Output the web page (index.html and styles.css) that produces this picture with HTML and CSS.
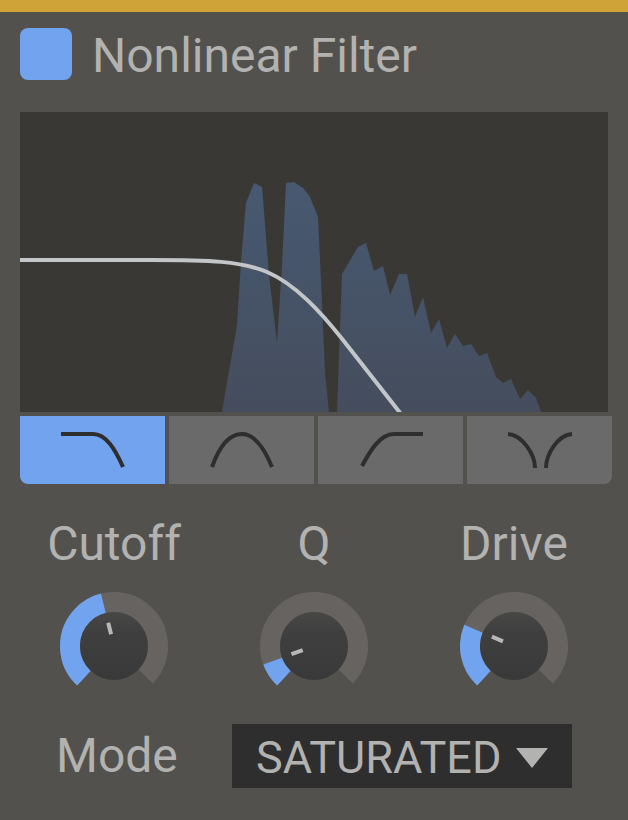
FILE: index.html
```html
<!DOCTYPE html>
<html lang="en">

<head>
  <meta charset="utf-8">
  <meta name="viewport" content="width=device-width, initial-scale=1">
  <title>Nonlinear Filter</title>
  <link rel="stylesheet" href="styles.css">
</head>

<body>
  <main class="panel">
    <header class="panel-header">
      <input class="power" type="checkbox" id="power" checked>
      <label for="power">Nonlinear Filter</label>
    </header>

    <svg class="display" viewBox="0 0 588 300" preserveAspectRatio="none" role="img" aria-label="Filter response">
      <defs>
        <linearGradient id="spectrumFill" x1="0" y1="0" x2="0" y2="1">
          <stop offset="0" stop-color="#475971" />
          <stop offset="1" stop-color="#454d5d" />
        </linearGradient>
        <linearGradient id="capFill" x1="0" y1="0" x2="0" y2="1">
          <stop offset="0" stop-color="#474746" />
          <stop offset="0.3" stop-color="#3f3f3f" />
          <stop offset="1" stop-color="#393939" />
        </linearGradient>
      </defs>
      <path fill="url(#spectrumFill)" d="M202 300 L217 213 L221 150 L226 91 L234 71 L242 75 L249 163 L257 231 L262 155 L266 71 L274 70 L283 76 L290 85 L298 105 L302 191 L305 261 L309 300 Z
        M317 300 L322 162 L338 135 L346 131 L354 159 L363 154 L370 183 L379 162 L387 162 L395 205 L403 185 L411 221 L419 207 L427 236 L435 222 L443 234 L451 232 L459 244 L467 241 L476 265 L483 271 L491 267 L500 287 L508 278 L516 286 L521 300 Z" />
      <path class="response" d="M0 148 L130 148 C190 148 221 149 247 160 C275 172 300 199 323 228 L381 302" />
    </svg>

    <div class="filter-types">
      <button class="type active" type="button" aria-label="Low pass" aria-pressed="true">
        <svg viewBox="0 0 64 36"><path d="M0 2 H32 C45 2 54 17 62 35" /></svg>
      </button>
      <button class="type" type="button" aria-label="Band pass" aria-pressed="false">
        <svg viewBox="0 0 64 36"><path d="M2 35 C8 18 18 2 32 2 C45 2 55 18 62 35" /></svg>
      </button>
      <button class="type" type="button" aria-label="High pass" aria-pressed="false">
        <svg viewBox="0 0 64 36"><path d="M3 34 C11 19 21 2 35 2 H64" /></svg>
      </button>
      <button class="type" type="button" aria-label="Notch" aria-pressed="false">
        <svg viewBox="0 0 64 36"><path d="M0 2 C14 3 27 22 27 36 M64 2 C50 3 38 22 38 36" /></svg>
      </button>
    </div>

    <div class="knobs">
      <div class="knob">
        <label for="cutoff">Cutoff</label>
        <div class="dial" style="--value: 123">
          <svg viewBox="0 0 108 108">
            <circle class="track" cx="54" cy="54" r="44" pathLength="360" />
            <circle class="value" cx="54" cy="54" r="44" pathLength="360" />
            <circle class="cap" cx="54" cy="54" r="34" />
            <path class="needle" d="M54 30 V42" />
          </svg>
          <input type="range" id="cutoff" min="0" max="271" value="123">
        </div>
      </div>
      <div class="knob">
        <label for="q">Q</label>
        <div class="dial" style="--value: 27">
          <svg viewBox="0 0 108 108">
            <circle class="track" cx="54" cy="54" r="44" pathLength="360" />
            <circle class="value" cx="54" cy="54" r="44" pathLength="360" />
            <circle class="cap" cx="54" cy="54" r="34" />
            <path class="needle" d="M54 30 V42" />
          </svg>
          <input type="range" id="q" min="0" max="271" value="27">
        </div>
      </div>
      <div class="knob">
        <label for="drive">Drive</label>
        <div class="dial" style="--value: 70">
          <svg viewBox="0 0 108 108">
            <circle class="track" cx="54" cy="54" r="44" pathLength="360" />
            <circle class="value" cx="54" cy="54" r="44" pathLength="360" />
            <circle class="cap" cx="54" cy="54" r="34" />
            <path class="needle" d="M54 30 V42" />
          </svg>
          <input type="range" id="drive" min="0" max="271" value="70">
        </div>
      </div>
    </div>

    <div class="mode">
      <label for="mode">Mode</label>
      <div class="select">
        <select id="mode">
          <option>SATURATED</option>
        </select>
        <svg class="arrow" viewBox="0 0 32 20"><path d="M0 0 H32 L16 20 Z" /></svg>
      </div>
    </div>
  </main>
  <script src="script.js"></script>
</body>

</html>
```
FILE: styles.css
```css
* {
  box-sizing: border-box;
}

body {
  margin: 0;
  background-color: #52514d;
  color: #b2b2b0;
  font-family: Roboto, "Liberation Sans", sans-serif;
  font-size: 48px;
  line-height: 56px;
}

svg {
  display: block;
}

.panel {
  min-height: 100vh;
  padding: 16px 16px 32px 20px;
  border-top: 12px solid #d0a338;
}

.panel-header {
  display: flex;
  align-items: flex-start;
  gap: 20px;
}

.power {
  appearance: none;
  width: 52px;
  height: 52px;
  margin: 0;
  border-radius: 8px;
  background-color: #666564;
  cursor: pointer;
}

.power:checked {
  background-color: #72a3ef;
}

/* spectrum */
.display {
  width: calc(100% - 4px);
  height: 300px;
  margin-top: 28px;
  background-color: #393835;
}

.response {
  fill: none;
  stroke: #c3c6c8;
  stroke-width: 4px;
}

/* filter shape buttons */
.filter-types {
  display: grid;
  grid-template-columns: repeat(4, 1fr);
  gap: 4px;
  height: 68px;
  margin-top: 4px;
  border-radius: 0 0 8px 8px;
  overflow: hidden;
}

.type {
  display: flex;
  justify-content: center;
  align-items: center;
  padding: 0;
  border: none;
  background-color: #6a6a6a;
  cursor: pointer;
}

.type.active {
  background-color: #72a3ef;
}

.type svg {
  width: 64px;
  height: 36px;
  overflow: visible;
  fill: none;
  stroke: #2e2e2e;
  stroke-width: 4px;
}

/* knobs */
.knobs {
  display: grid;
  grid-template-columns: repeat(3, 1fr);
  margin: 32px -2px 0 -6px;
}

.knob {
  display: flex;
  flex-direction: column;
  align-items: center;
  gap: 20px;
}

.dial {
  position: relative;
  width: 108px;
  height: 108px;
}

.dial circle,
.needle {
  transform-origin: 54px 54px;
}

.track,
.value {
  fill: none;
  stroke-width: 20px;
  transform: rotate(133deg);
}

.track {
  stroke: #666361;
  stroke-dasharray: 271 360;
}

.value {
  stroke: #72a3ef;
  stroke-dasharray: calc(var(--value) * 1px) 360px;
}

.cap {
  fill: url(#capFill);
}

.needle {
  stroke: #b8b8b6;
  stroke-width: 4px;
  transform: rotate(calc(var(--value) * 1deg - 137deg));
}

.dial input {
  position: absolute;
  inset: 0;
  width: 100%;
  height: 100%;
  margin: 0;
  opacity: 0;
  cursor: pointer;
}

/* mode */
.mode {
  display: flex;
  align-items: center;
  justify-content: space-between;
  margin: 24px 40px 0 36px;
}

.select {
  position: relative;
  width: 340px;
}

.select select {
  appearance: none;
  display: block;
  width: 100%;
  height: 64px;
  padding: 2px 56px 0 24px;
  border: none;
  border-radius: 0;
  background-color: #2e2e2e;
  color: inherit;
  font-family: inherit;
  font-size: 45px;
  cursor: pointer;
}

.arrow {
  position: absolute;
  top: 24px;
  right: 24px;
  width: 32px;
  height: 20px;
  fill: #b2b2b0;
  pointer-events: none;
}
```
FILE: script.js
```js
var knobs = document.querySelectorAll('.dial input');
var types = document.querySelectorAll('.type');

knobs.forEach(function (knob) {
  knob.addEventListener('input', function () {
    knob.parentElement.style.setProperty('--value', knob.value);
  });
});

types.forEach(function (type) {
  type.addEventListener('click', function () {
    types.forEach(function (other) {
      other.classList.toggle('active', other === type);
      other.setAttribute('aria-pressed', other === type);
    });
  });
});
```
